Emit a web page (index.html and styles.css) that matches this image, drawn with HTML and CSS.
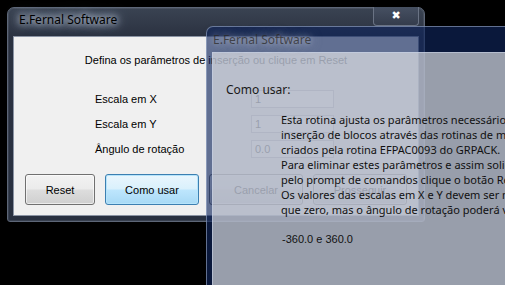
FILE: index.html
```html
<!DOCTYPE html>
<html lang="pt">
<head>
    <meta charset="UTF-8">
    <title>E.Fernal Software</title>
    <link rel="stylesheet" href="styles.css">
</head>
<body>
    <!-- janela principal: parametros de insercao -->
    <div class="window win-main">
        <div class="title">E.Fernal Software</div>
        <div class="close-btn">&#x2716;</div>
        <div class="client">
            <p class="intro">Defina os parâmetros de inserção ou clique em Reset</p>
            <div class="fields">
                <label>Escala em X</label>
                <div class="field">1</div>
                <label>Escala em Y</label>
                <div class="field">1</div>
                <label>Ângulo de rotação</label>
                <div class="field">0.0</div>
            </div>
            <div class="buttons">
                <button class="btn btn-small">Reset</button>
                <button class="btn btn-default">Como usar</button>
                <button class="btn">Cancelar</button>
                <button class="btn">Prosseguir</button>
            </div>
        </div>
    </div>

    <!-- janela de ajuda, semi-transparente por cima -->
    <div class="window win-help">
        <div class="title">E.Fernal Software</div>
        <div class="client">
            <div class="help-label">Como usar:</div>
            <div class="help-text">
                <div>Esta rotina ajusta os parâmetros necessários para a</div>
                <div>inserção de blocos através das rotinas de menu</div>
                <div>criados pela rotina EFPAC0093 do GRPACK.</div>
                <div>Para eliminar estes parâmetros e assim solicitá-los</div>
                <div>pelo prompt de comandos clique o botão Reset.</div>
                <div>Os valores das escalas em X e Y devem ser maiores</div>
                <div>que zero, mas o ângulo de rotação poderá variar entre</div>
                <div>&nbsp;</div>
                <div class="range">-360.0 e 360.0</div>
            </div>
        </div>
    </div>
</body>
</html>
```

FILE: styles.css
```css
body {
    margin: 0;
    width: 505px;
    height: 285px;
    background-color: #000;
    position: relative;
    overflow: hidden;
    font-family: "Liberation Sans", Arial, sans-serif;
    font-size: 11px;
    color: #000;
}

.window {
    position: absolute;
    box-sizing: border-box;
}

.title {
    height: 28px;
    line-height: 24px;
    padding-left: 6px;
    font-family: "Noto Sans", "Open Sans", sans-serif;
    font-size: 12px;
    white-space: nowrap;
}

/* ---- janela principal ---- */

.win-main {
    left: 7px;
    top: 7px;
    width: 418px;
    height: 215px;
    padding: 0 5px 5px 5px;
    border: 1px solid #5d6677;
    border-radius: 7px 7px 3px 3px;
    background: linear-gradient(#3a4352, #2a3140 30px, #283040);
    box-shadow: inset 0 0 0 1px rgba(255,255,255,0.08);
}

.win-main .title {
    color: #000;
    text-shadow: 0 0 6px #c9d3e4, 0 0 10px #c9d3e4, 0 0 14px #aab8d0;
}

.close-btn {
    position: absolute;
    left: 365px;
    top: -1px;
    width: 44px;
    height: 18px;
    line-height: 18px;
    text-align: center;
    color: #fff;
    font-family: "DejaVu Sans", sans-serif;
    font-size: 11px;
    font-weight: bold;
    background: linear-gradient(#465062, #343c4c);
    border: 1px solid #6a7384;
    border-top: none;
    border-radius: 0 0 4px 4px;
}

.win-main .client {
    height: 180px;
    box-sizing: border-box;
    background-color: #f0f0f0;
    border: 1px solid #8a93a3;
    display: flex;
    flex-direction: column;
}

.intro {
    margin: 16px 0 0 0;
    line-height: 14px;
    text-align: center;
}

.fields {
    display: grid;
    grid-template-columns: 156px 83px;
    grid-auto-rows: 25px;
    align-items: center;
    margin: 19px 0 0 81px;
}

.field {
    height: 18px;
    box-sizing: border-box;
    line-height: 16px;
    padding-left: 3px;
    background-color: #fff;
    border: 1px solid #abadb3;
}

.buttons {
    display: flex;
    gap: 10px;
    margin: 13px 0 0 11px;
}

.btn {
    width: 94px;
    height: 31px;
    padding: 0;
    font-family: "Liberation Sans", Arial, sans-serif;
    font-size: 11px;
    color: #000;
    border: 1px solid #707070;
    border-radius: 3px;
    background: linear-gradient(#f2f2f2, #ebebeb 49%, #dddddd 51%, #cfcfcf);
    box-shadow: inset 0 0 0 1px rgba(255,255,255,0.6);
}

.btn-small {
    width: 70px;
}

.btn-default {
    border-color: #3c7fb1;
    background: linear-gradient(#eaf6fd, #d9f0fc 49%, #bee6fd 51%, #a7d9f5);
    box-shadow: inset 0 0 0 1px #b6e4fb;
}

/* ---- janela de ajuda ---- */

.win-help {
    left: 206px;
    top: 26px;
    width: 330px;
    height: 290px;
    padding-left: 5px;
    border: 1px solid rgba(170,185,215,0.55);
    border-radius: 7px 7px 0 0;
    background-color: rgba(16,38,92,0.64);
}

.win-help .title {
    height: 25px;
    line-height: 26px;
    padding-left: 1px;
    color: rgba(40,36,30,0.7);
    text-shadow: 0 0 6px rgba(225,230,240,0.6), 0 0 12px rgba(225,230,240,0.5);
}

.win-help .client {
    height: 100%;
    box-sizing: border-box;
    background-color: rgba(240,240,240,0.62);
    border-left: 1px solid rgba(200,210,230,0.6);
    border-top: 1px solid rgba(200,210,230,0.6);
    padding: 29px 0 0 13px;
    font-family: "Noto Sans", "Open Sans", sans-serif;
    white-space: nowrap;
}

.help-label {
    font-size: 12px;
    line-height: 16px;
    color: #1a1a1a;
}

.help-text {
    margin: 14px 0 0 55px;
    font-size: 11px;
    line-height: 15px;
    color: #111;
}

.range {
    font-family: "Liberation Sans", Arial, sans-serif;
    font-size: 11px;
    margin-left: 1px;
}
```
